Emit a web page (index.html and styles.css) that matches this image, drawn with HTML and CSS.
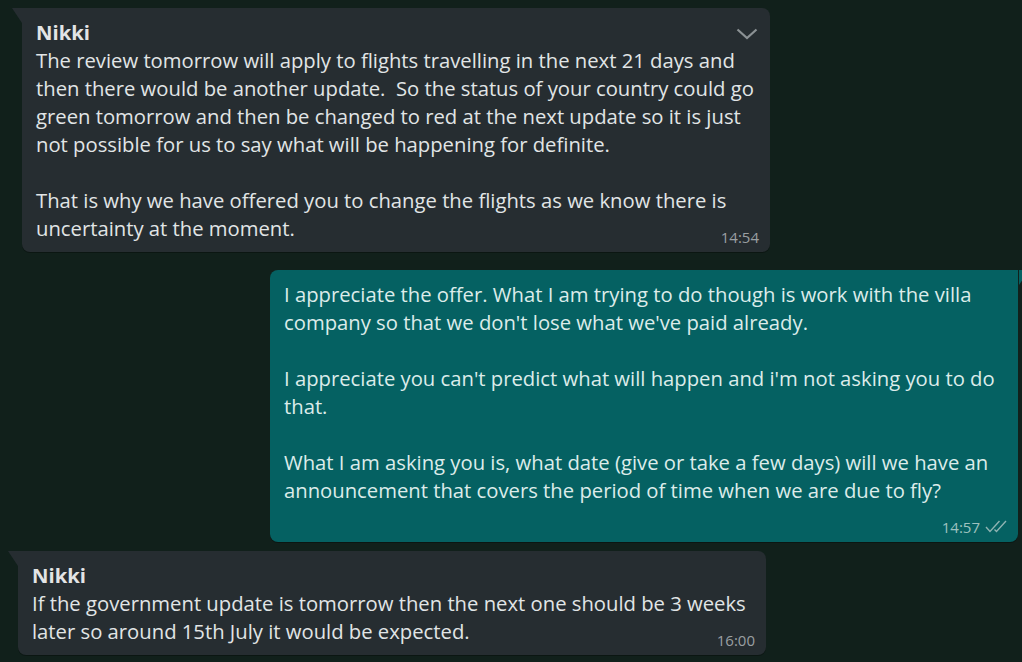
FILE: index.html
```html
<!DOCTYPE html>
<html lang="en">
<head>
  <meta charset="UTF-8" />
  <meta name="viewport" content="width=device-width, initial-scale=1.0"/>
  <title>Chat</title>
  <link rel="stylesheet" href="styles.css">
</head>
<body>

  <div class="chat">

    <div class="row in">
      <div class="bubble tail">
        <span class="menu">
          <svg width="22" height="12" viewBox="0 0 22 12"><polyline points="1.5,1.5 11,10 20.5,1.5" fill="none" stroke="#8b9194" stroke-width="2.2"/></svg>
        </span>
        <div class="sender">Nikki</div>
        <div class="text">The review tomorrow will apply to flights travelling in the next 21 days and
then there would be another update.&nbsp; So the status of your country could go
green tomorrow and then be changed to red at the next update so it is just
not possible for us to say what will be happening for definite.

That is why we have offered you to change the flights as we know there is
uncertainty at the moment.<span class="meta">14:54</span></div>
      </div>
    </div>

    <div class="row out">
      <div class="bubble tail">
        <div class="text">I appreciate the offer. What I am trying to do though is work with the villa
company so that we don't lose what we've paid already.

I appreciate you can't predict what will happen and i'm not asking you to do
that.

What I am asking you is, what date (give or take a few days) will we have an
announcement that covers the period of time when we are due to fly?
<span class="meta">14:57<svg class="ticks" width="22" height="13" viewBox="0 0 22 13"><polyline points="1,7 5,11.5 14.5,1" fill="none" stroke="#8fb3b2" stroke-width="1.4"/><polyline points="9.5,9.5 11.5,11.5 21,1" fill="none" stroke="#8fb3b2" stroke-width="1.4"/></svg></span></div>
      </div>
    </div>

    <div class="row in shift">
      <div class="bubble tail">
        <div class="sender">Nikki</div>
        <div class="text">If the government update is tomorrow then the next one should be 3 weeks
later so around 15th July it would be expected.<span class="meta">16:00</span></div>
      </div>
    </div>

  </div>

</body>
</html>
```

FILE: styles.css
```css
:root {
  --bg: #11201b;
  --bubble-in: #262d31;
  --bubble-out: #056162;
  --text: #e1e5e6;
  --text-out: #dcecea;
  --meta: #9a9fa2;
  --meta-out: #9dc1bf;
}

html, body {
  height: 100%;
}

body {
  margin: 0;
  background-color: var(--bg);
  font-family: "Open Sans", Lato, sans-serif;
  color: var(--text);
  overflow: hidden;
}

.chat {
  padding: 8px 0 0 22px;
}

.row {
  display: flex;
}

.row.in {
  justify-content: flex-start;
  margin-bottom: 18px;
}

.row.out {
  justify-content: flex-end;
  margin-right: 4px;
  margin-bottom: 9px;
}

.row.shift {
  margin-left: -4px;
}

.bubble {
  position: relative;
  width: 748px;
  box-sizing: border-box;
  padding: 11px 8px 7px 14px;
  border-radius: 8px;
  background-color: var(--bubble-in);
  box-shadow: 0 1px 0.5px rgba(0, 0, 0, 0.3);
  display: flex;
  flex-direction: column;
}

.out .bubble {
  background-color: var(--bubble-out);
  color: var(--text-out);
  padding-top: 10px;
}

/* the little corner tail */
.in .bubble.tail {
  border-top-left-radius: 0;
}

.in .bubble.tail::before {
  content: "";
  position: absolute;
  top: 0;
  left: -10px;
  width: 10px;
  height: 15px;
  background-color: var(--bubble-in);
  clip-path: polygon(0 0, 100% 0, 100% 100%);
}

.out .bubble.tail {
  border-top-right-radius: 0;
}

.out .bubble.tail::after {
  content: "";
  position: absolute;
  top: 0;
  right: -11px;
  width: 10px;
  height: 15px;
  background-color: var(--bubble-out);
  clip-path: polygon(0 0, 100% 0, 0 100%);
}

.menu {
  position: absolute;
  top: 20px;
  right: 12px;
  line-height: 0;
}

.sender {
  font-size: 20.25px;
  font-weight: 700;
  line-height: 27px;
  color: #e3e4e5;
}

.text {
  font-size: 20.25px;
  line-height: 28px;
  white-space: pre-line;
}

/* time sits at the end of the last line, pushed down a little */
.meta {
  float: right;
  margin: 15px 3px 0 12px;
  font-size: 15px;
  line-height: 16px;
  white-space: nowrap;
  color: var(--meta);
  display: flex;
  align-items: center;
  gap: 5px;
}

.out .meta {
  color: var(--meta-out);
}

.ticks {
  margin-top: -2px;
}
```
